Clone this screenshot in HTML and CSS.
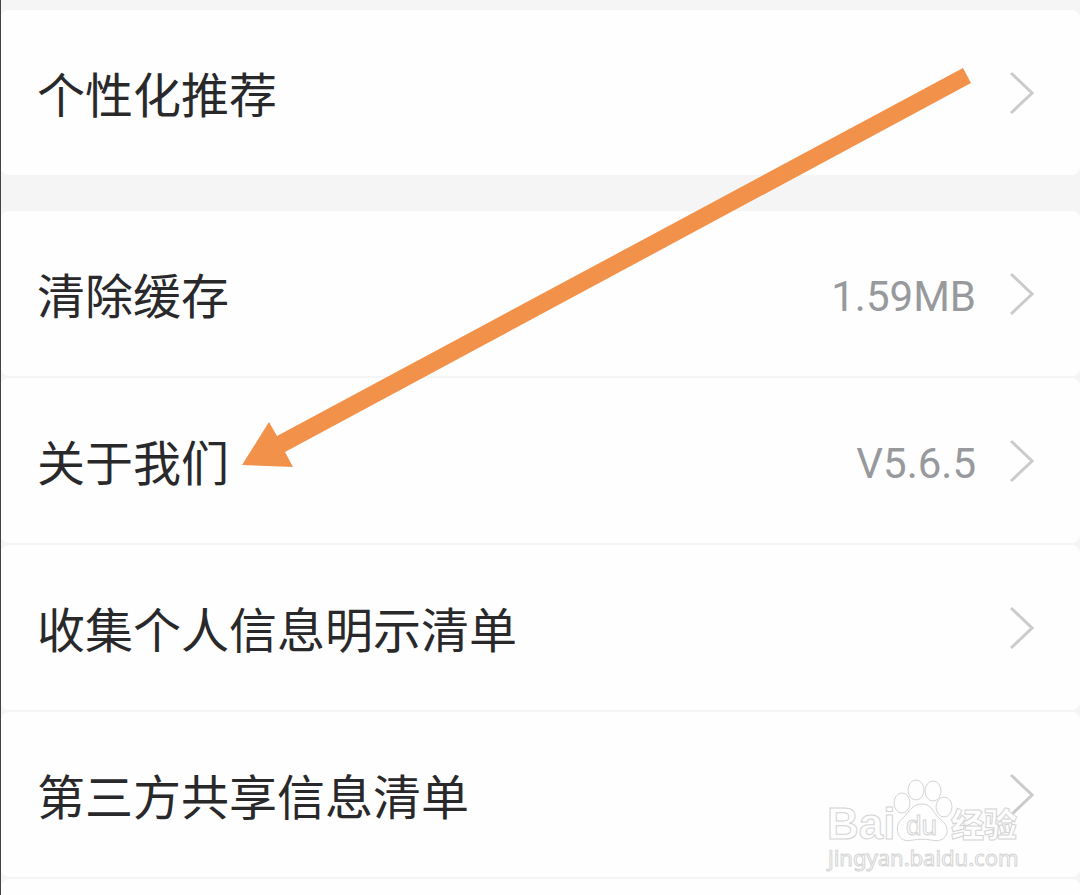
FILE: index.html
```
<!DOCTYPE html>
<html lang="zh-CN">
<head>
  <meta charset="UTF-8" />
  <meta name="viewport" content="width=device-width, initial-scale=1.0" />
  <title>设置</title>
  <link rel="stylesheet" href="styles.css">
</head>
<body>
  <main class="settings">
    <nav class="group">
      <a class="row" href="#recommend">
        <span class="row-label">个性化推荐</span>
        <svg class="chevron" viewBox="0 0 24 44" aria-hidden="true"><path d="M1 2 L22 22 L1 42" /></svg>
      </a>
    </nav>
    <nav class="group">
      <a class="row" href="#cache">
        <span class="row-label">清除缓存</span>
        <span class="row-value">1.59MB</span>
        <svg class="chevron" viewBox="0 0 24 44" aria-hidden="true"><path d="M1 2 L22 22 L1 42" /></svg>
      </a>
      <a class="row" href="#about">
        <span class="row-label">关于我们</span>
        <span class="row-value">V5.6.5</span>
        <svg class="chevron" viewBox="0 0 24 44" aria-hidden="true"><path d="M1 2 L22 22 L1 42" /></svg>
      </a>
      <a class="row" href="#collected">
        <span class="row-label">收集个人信息明示清单</span>
        <svg class="chevron" viewBox="0 0 24 44" aria-hidden="true"><path d="M1 2 L22 22 L1 42" /></svg>
      </a>
      <a class="row" href="#shared">
        <span class="row-label">第三方共享信息清单</span>
        <svg class="chevron" viewBox="0 0 24 44" aria-hidden="true"><path d="M1 2 L22 22 L1 42" /></svg>
      </a>
    </nav>
    <div class="next-row"></div>

    <!-- arrow pointing at the "about" row -->
    <svg class="arrow" viewBox="0 0 730 402" aria-hidden="true">
      <path d="M0 398 L27 355 L35 369 L721 1 L729 16 L43 385 L51 400 Z" />
    </svg>

    <svg class="watermark" viewBox="0 0 200 96" role="img" aria-label="Baidu 经验">
      <text class="mark-bai" x="3" y="63">Bai</text>
      <g class="mark-paw">
        <ellipse cx="78" cy="27" rx="8" ry="10" />
        <ellipse cx="92" cy="14" rx="8" ry="10" />
        <ellipse cx="109" cy="15" rx="8" ry="10" />
        <ellipse cx="120" cy="31" rx="8" ry="10" />
        <path d="M98 28 C88 28 85 36 80 41 C75 45 72 50 74 57 C76 64 82 66 89 64 C95 63 101 63 107 64 C114 66 121 64 123 57 C124 50 120 46 115 42 C109 37 108 28 98 28 Z" />
      </g>
      <text class="mark-du" x="82" y="59">du</text>
      <text class="mark-jy" x="127" y="61">经验</text>
      <text class="mark-url" x="4" y="90">jingyan.baidu.com</text>
    </svg>
  </main>
</body>
</html>
```
FILE: styles.css
```
* {
  box-sizing: border-box;
}
body {
  margin: 0;
  min-height: 100vh;
  background: #f5f5f5;
  font-family: "Noto Sans CJK SC", sans-serif;
  overflow: hidden;
}
.settings {
  position: relative;
  display: flex;
  flex-direction: column;
  min-height: 100vh;
  padding-top: 10px;
  border-left: 1px solid #444448;
}
.group {
  display: flex;
  flex-direction: column;
  gap: 2px;
  margin-bottom: 36px;
}
.group + .group {
  margin-bottom: 2px;
}
.row {
  display: flex;
  align-items: center;
  height: 165px;
  padding: 0 46px 0 36px;
  background: #fefefe;
  border-radius: 8px;
  color: #29292b;
  text-decoration: none;
}
.row-label {
  flex: 1;
  padding-bottom: 2px;
  font-size: 48px;
  line-height: 64px;
}
.row-value {
  margin-right: 34px;
  padding-top: 6px;
  font-family: Roboto, sans-serif;
  font-size: 42px;
  line-height: 48px;
  color: #98999c;
}
.chevron {
  width: 24px;
  height: 44px;
  fill: none;
  stroke: #cbcbcb;
  stroke-width: 3;
}
.next-row {
  flex: 1;
  min-height: 16px;
  background: #fefefe;
  border-radius: 8px 8px 0 0;
}
.arrow {
  position: absolute;
  top: 67px;
  left: 241px;
  width: 730px;
  height: 402px;
  fill: #f2924a;
  pointer-events: none;
}
.watermark {
  position: absolute;
  top: 776px;
  right: 56px;
  width: 200px;
  height: 96px;
  overflow: visible;
  fill: #fefefe;
  stroke: #d4d4d4;
  stroke-width: 1;
  pointer-events: none;
}
.mark-bai,
.mark-du {
  font-family: "Liberation Sans", sans-serif;
}
.mark-bai {
  font-size: 44px;
  font-weight: bold;
}
.mark-du {
  font-size: 28px;
}
.mark-jy {
  font-family: "Noto Sans CJK SC", sans-serif;
  font-size: 33px;
  font-weight: 900;
}
.mark-url {
  font-family: "Noto Sans", sans-serif;
  font-size: 22px;
}
```
